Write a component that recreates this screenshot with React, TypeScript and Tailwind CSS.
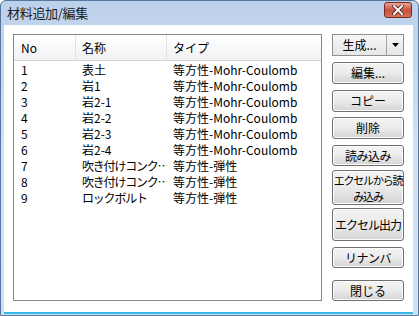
import React from 'react'

const font = { fontFamily: '"Noto Sans CJK JP", "Noto Sans", sans-serif' }

const rows = [
  ['1', '表土', '等方性-Mohr-Coulomb'],
  ['2', '岩1', '等方性-Mohr-Coulomb'],
  ['3', '岩2-1', '等方性-Mohr-Coulomb'],
  ['4', '岩2-2', '等方性-Mohr-Coulomb'],
  ['5', '岩2-3', '等方性-Mohr-Coulomb'],
  ['6', '岩2-4', '等方性-Mohr-Coulomb'],
  ['7', '吹き付けコンク…', '等方性-弾性'],
  ['8', '吹き付けコンク…', '等方性-弾性'],
  ['9', 'ロックボルト', '等方性-弾性'],
]

function Btn({ label, className }: { label: React.ReactNode; className: string }) {
  return (
    <button
      className={`w-[72px] rounded-[3px] border border-[#707070] bg-gradient-to-b from-[#f4f4f4] via-[#ebebeb] to-[#d4d4d4] text-[12px] leading-[14px] text-black flex flex-col items-center justify-center text-center whitespace-nowrap shadow-[inset_0_0_0_1px_#fcfcfc] ${className}`}
    >
      {label}
    </button>
  )
}

export default function App() {
  return (
    <div style={font} className="w-[419px] h-[316px] overflow-hidden">
      <div className="w-[419px] h-[316px] rounded-t-[6px] border border-[#56779e] bg-gradient-to-b from-[#bcd1ea] via-[#d3e2f3] to-[#cfe0f2] flex flex-col">
        {/* title bar */}
        <div className="h-[24px] flex items-center justify-between pl-[6px] pr-[6px] shrink-0">
          <span className="text-[13px] text-[#1b1b1b] tracking-[-0.3px]">材料追加/編集</span>
          <div className="w-[28px] h-[16px] mt-[-6px] rounded-[3px] border border-[#7a2a20] bg-gradient-to-b from-[#e8a596] via-[#c7503b] to-[#d1735c] flex items-center justify-center">
            <svg width="12" height="10" viewBox="0 0 12 10">
              <path d="M2 1 L10 9 M10 1 L2 9" stroke="#3d1a14" strokeWidth="3.4" strokeLinecap="square" />
              <path d="M2 1 L10 9 M10 1 L2 9" stroke="#fff" strokeWidth="2" strokeLinecap="square" />
            </svg>
          </div>
        </div>

        {/* client area */}
        <div className="flex-1 ml-[3px] mr-[5px] mb-[3px] bg-white flex pl-[9px] pt-[9px] pr-[7px] pb-[11px] gap-[10px] border-b-2 border-[#35b8e6]">
          {/* list */}
          <div className="w-[309px] h-[267px] border border-[#828790] bg-white text-[12px] text-black">
            <div className="h-[26px] flex items-center bg-gradient-to-b from-white to-[#f1f2f4] border-b border-[#d5d5d5]">
              <div className="w-[62px] h-full flex items-center pl-[7px] border-r border-[#e3e3e3]">No</div>
              <div className="w-[91px] h-full flex items-center pl-[6px] border-r border-[#e3e3e3]">名称</div>
              <div className="flex-1 h-full flex items-center pl-[6px]">タイプ</div>
            </div>
            <div className="pt-[1px]">
              {rows.map((r) => (
                <div key={r[0]} className="h-[16px] flex items-center leading-[16px]">
                  <div className="w-[62px] pl-[7px]">{r[0]}</div>
                  <div
                    className={`w-[91px] pl-[6px] whitespace-nowrap overflow-hidden ${
                      r[1].length > 5 ? 'tracking-[-1.2px]' : ''
                    }`}
                  >
                    {r[1]}
                  </div>
                  <div className="flex-1 pl-[6px] whitespace-nowrap">{r[2]}</div>
                </div>
              ))}
            </div>
          </div>

          {/* buttons */}
          <div className="flex flex-col">
            <div className="w-[72px] h-[22px] border border-[#8e8f8f] bg-gradient-to-b from-[#f7f7f7] to-[#e6e6e6] flex text-[12px]">
              <div className="flex-1 flex items-center justify-center border-r border-[#a0a0a0]">生成...</div>
              <div className="w-[16px] flex items-center justify-center">
                <svg width="7" height="4" viewBox="0 0 7 4">
                  <path d="M0 0 H7 L3.5 4 Z" fill="#000" />
                </svg>
              </div>
            </div>
            <Btn label="編集..." className="h-[22px] mt-[6px]" />
            <Btn label="コピー" className="h-[22px] mt-[6px]" />
            <Btn label="削除" className="h-[22px] mt-[5px]" />
            <Btn label="読み込み" className="h-[21px] mt-[6px] tracking-[-0.5px]" />
            <Btn
              label={
                <>
                  <div className="text-[11px] leading-[16px] tracking-[-1.2px]">エクセルから読</div>
                  <div className="text-[11px] leading-[16px] tracking-[-1.2px]">み込み</div>
                </>
              }
              className="h-[35px] mt-[4px]"
            />
            <Btn label="エクセル出力" className="h-[33px] mt-[3px] tracking-[-1px]" />
            <Btn label="リナンバ" className="h-[21px] mt-[6px] tracking-[-0.5px]" />
            <Btn label="閉じる" className="h-[21px] mt-[12px]" />
          </div>
        </div>
      </div>
    </div>
  )
}
